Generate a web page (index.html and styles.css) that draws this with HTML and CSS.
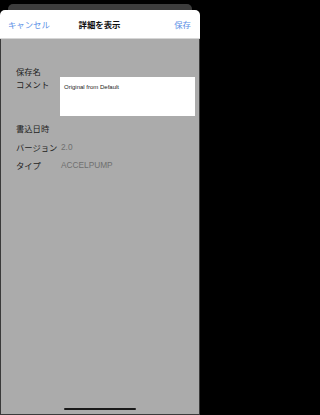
FILE: index.html
```html
<!DOCTYPE html>
<html lang="ja">
<head>
<meta charset="utf-8">
<link rel="stylesheet" href="styles.css">
</head>
<body>
<div class="screen">
  <div class="status"></div>
  <div class="back-card"></div>
  <div class="sheet">
    <div class="nav">
      <span class="nav-btn left">キャンセル</span>
      <span class="nav-title">詳細を表示</span>
      <span class="nav-btn right">保存</span>
    </div>
    <div class="content">
      <div class="row first"><span class="label">保存名</span><span class="value"></span></div>
      <div class="row comment">
        <span class="label">コメント</span>
        <div class="textbox">Original from Default</div>
      </div>
      <div class="row"><span class="label">書込日時</span><span class="value"></span></div>
      <div class="row"><span class="label">バージョン</span><span class="value">2.0</span></div>
      <div class="row"><span class="label">タイプ</span><span class="value">ACCELPUMP</span></div>
      <div class="spacer"></div>
      <div class="home-bar"></div>
    </div>
  </div>
</div>
</body>
</html>
```
FILE: styles.css
```css
html, body {
  margin: 0;
  padding: 0;
  background: #000;
}
.screen {
  width: 200px;
  height: 415px;
  display: flex;
  flex-direction: column;
  font-family: "Liberation Sans", "Noto Sans CJK JP", sans-serif;
  overflow: hidden;
}
.status {
  height: 4px;
  flex: none;
}
.back-card {
  height: 6px;
  margin: 0 8px;
  background: #3d3d3d;
  border-radius: 5px 5px 0 0;
  flex: none;
}
.sheet {
  flex: 1;
  display: flex;
  flex-direction: column;
  background: #fff;
  border-radius: 5px 5px 0 0;
  overflow: hidden;
}
.nav {
  height: 28px;
  flex: none;
  display: grid;
  grid-template-columns: 1fr auto 1fr;
  align-items: center;
  padding: 0 9px 0 8px;
  border-bottom: 1px solid #d6d6d6;
  font-size: 8.4px;
}
.nav-btn {
  color: #5b8fe6;
}
.nav-btn.right {
  justify-self: end;
}
.nav-title {
  color: #111;
  font-weight: bold;
}
.content {
  flex: 1;
  display: flex;
  flex-direction: column;
  background: #ababab;
  border-left: 1px solid #3a3a3a;
  border-right: 1px solid #3a3a3a;
  border-bottom: 1px solid #3a3a3a;
  padding: 25px 4px 0 15px;
  font-size: 8.3px;
}
.row {
  display: flex;
  align-items: center;
  height: 14px;
  margin-bottom: 4.5px;
}
.row.first {
  height: 13px;
  margin-bottom: 0;
}
.row.comment {
  height: auto;
  align-items: flex-start;
  margin-bottom: 5px;
}
.row.comment .label {
  line-height: 14px;
  margin-top: 1px;
}
.label {
  width: 44px;
  flex: none;
  color: #1e1e1e;
  white-space: nowrap;
}
.value {
  color: #6f6f6f;
  padding-left: 1px;
}
.textbox {
  flex: 1;
  height: 39px;
  box-sizing: border-box;
  background: #fff;
  padding: 6px 4px 0 4px;
  font-size: 6px;
  line-height: 8px;
  color: #222;
}
.spacer {
  flex: 1;
}
.home-bar {
  align-self: center;
  width: 72px;
  height: 2.5px;
  border-radius: 2px;
  background: #1a1a1a;
  margin: 0 0 4px -11px;
}
```
